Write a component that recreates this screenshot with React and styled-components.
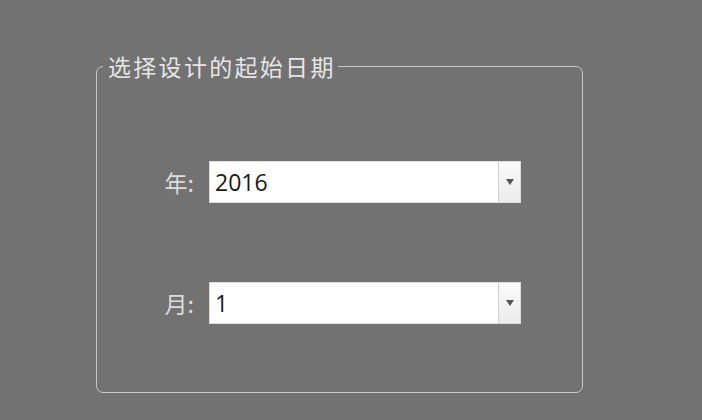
import React from 'react';
import styled, { createGlobalStyle } from 'styled-components';

const GlobalStyle = createGlobalStyle`
  html, body {
    margin: 0;
    padding: 0;
    background: #727272;
  }
  body {
    font-family: "Noto Sans CJK SC", "Open Sans", sans-serif;
  }
`;

const Page = styled.div`
  width: 702px;
  height: 420px;
  padding: 54px 0 0 96px;
  box-sizing: border-box;
`;

const GroupBox = styled.fieldset`
  width: 487px;
  height: 339px;
  box-sizing: border-box;
  margin: 0;
  padding: 0;
  border: 1px solid #c9c9c9;
  border-radius: 7px;
  display: flex;
  flex-direction: column;
`;

const Legend = styled.legend`
  margin-left: 6px;
  padding: 0 2px 0 5px;
  color: #e6e6e6;
  font-size: 23px;
  letter-spacing: 2.3px;
  line-height: 24px;
  font-family: "Noto Sans CJK SC", sans-serif;
`;

const Rows = styled.div`
  display: flex;
  flex-direction: column;
  gap: 79px;
  padding: 83px 0 0 62px;
`;

const Row = styled.div`
  display: flex;
  align-items: center;
  gap: 15px;
`;

const Label = styled.span`
  width: 35px;
  text-align: right;
  color: #dcdcdc;
  font-size: 23px;
  line-height: 26px;
  font-family: "Noto Sans CJK SC", sans-serif;
`;

const Combo = styled.div`
  width: 312px;
  height: 42px;
  box-sizing: border-box;
  background: #ffffff;
  border: 1px solid #dcdcdc;
  display: flex;
  align-items: stretch;
`;

const Value = styled.span`
  flex: 1;
  display: flex;
  align-items: center;
  padding-left: 5px;
  color: #1a1a1a;
  font-size: 23px;
  font-family: "Open Sans", "Liberation Sans", sans-serif;
`;

const ArrowButton = styled.span`
  width: 21px;
  border-left: 1px solid #cfcfcf;
  background: linear-gradient(#fafafa, #ececec);
  display: flex;
  align-items: center;
  justify-content: center;
`;

const Arrow = () => (
  <svg width="8" height="6" viewBox="0 0 8 6">
    <path d="M0 0 H8 L4 6 Z" fill="#555555" />
  </svg>
);

const Select = ({ value }) => (
  <Combo>
    <Value>{value}</Value>
    <ArrowButton>
      <Arrow />
    </ArrowButton>
  </Combo>
);

export default function App() {
  return (
    <>
      <GlobalStyle />
      <Page>
        <GroupBox>
          <Legend>选择设计的起始日期</Legend>
          <Rows>
            <Row>
              <Label>年:</Label>
              <Select value="2016" />
            </Row>
            <Row>
              <Label>月:</Label>
              <Select value="1" />
            </Row>
          </Rows>
        </GroupBox>
      </Page>
    </>
  );
}
